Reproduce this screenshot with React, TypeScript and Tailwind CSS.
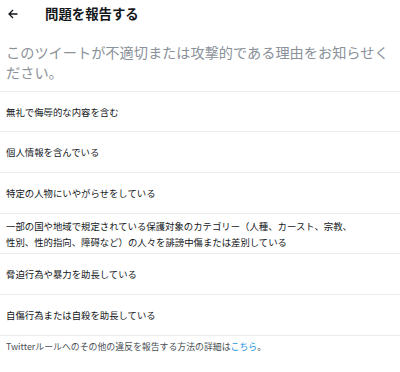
import React from "react";

const items: { text: React.ReactNode; h: string }[] = [
  { text: "無礼で侮辱的な内容を含む", h: "h-[40px]" },
  { text: "個人情報を含んでいる", h: "h-[41px]" },
  { text: "特定の人物にいやがらせをしている", h: "h-[41px]" },
  {
    text: (
      <>
        一部の国や地域で規定されている保護対象のカテゴリー（人種、カースト、宗教、
        <br />
        性別、性的指向、障碍など）の人々を誹謗中傷または差別している
      </>
    ),
    h: "h-[40px]",
  },
  { text: "脅迫行為や暴力を助長している", h: "h-[41px]" },
  { text: "自傷行為または自殺を助長している", h: "h-[41px]" },
];

export default function App() {
  return (
    <div
      className="w-[400px] h-[372px] bg-white overflow-hidden"
      style={{ fontFamily: '"Noto Sans CJK JP", "Noto Sans", sans-serif' }}
    >
      <div className="h-[28px] flex items-center">
        <svg className="ml-[8px] w-[10px] h-[10px]" viewBox="0 0 10 10" fill="none" stroke="#14171a" strokeWidth="1.3">
          <path d="M9.5 5H1M5 1L1 5l4 4" />
        </svg>
        <div className="ml-[27px] text-[13.4px] font-bold text-[#14171a] leading-none">問題を報告する</div>
      </div>
      <div className="px-[6px] pt-[14px] pb-[9px] text-[14.2px] leading-[20px] text-[#8a9199]">
        このツイートが不適切または攻撃的である理由をお知らせください。
      </div>
      {items.map((it, i) => (
        <div
          key={i}
          className={`${it.h} border-t border-[#e9ecee] flex items-center px-[6px] text-[9.4px] leading-[16px] text-[#14171a]`}
        >
          <div>{it.text}</div>
        </div>
      ))}
      <div className="border-t border-[#e9ecee] px-[6px] pt-[3px] text-[8.9px] leading-[16px] text-[#4a4f55]">
        Twitterルールへのその他の違反を報告する方法の詳細は
        <span className="text-[#1b95e0]">こちら</span>。
      </div>
    </div>
  );
}
